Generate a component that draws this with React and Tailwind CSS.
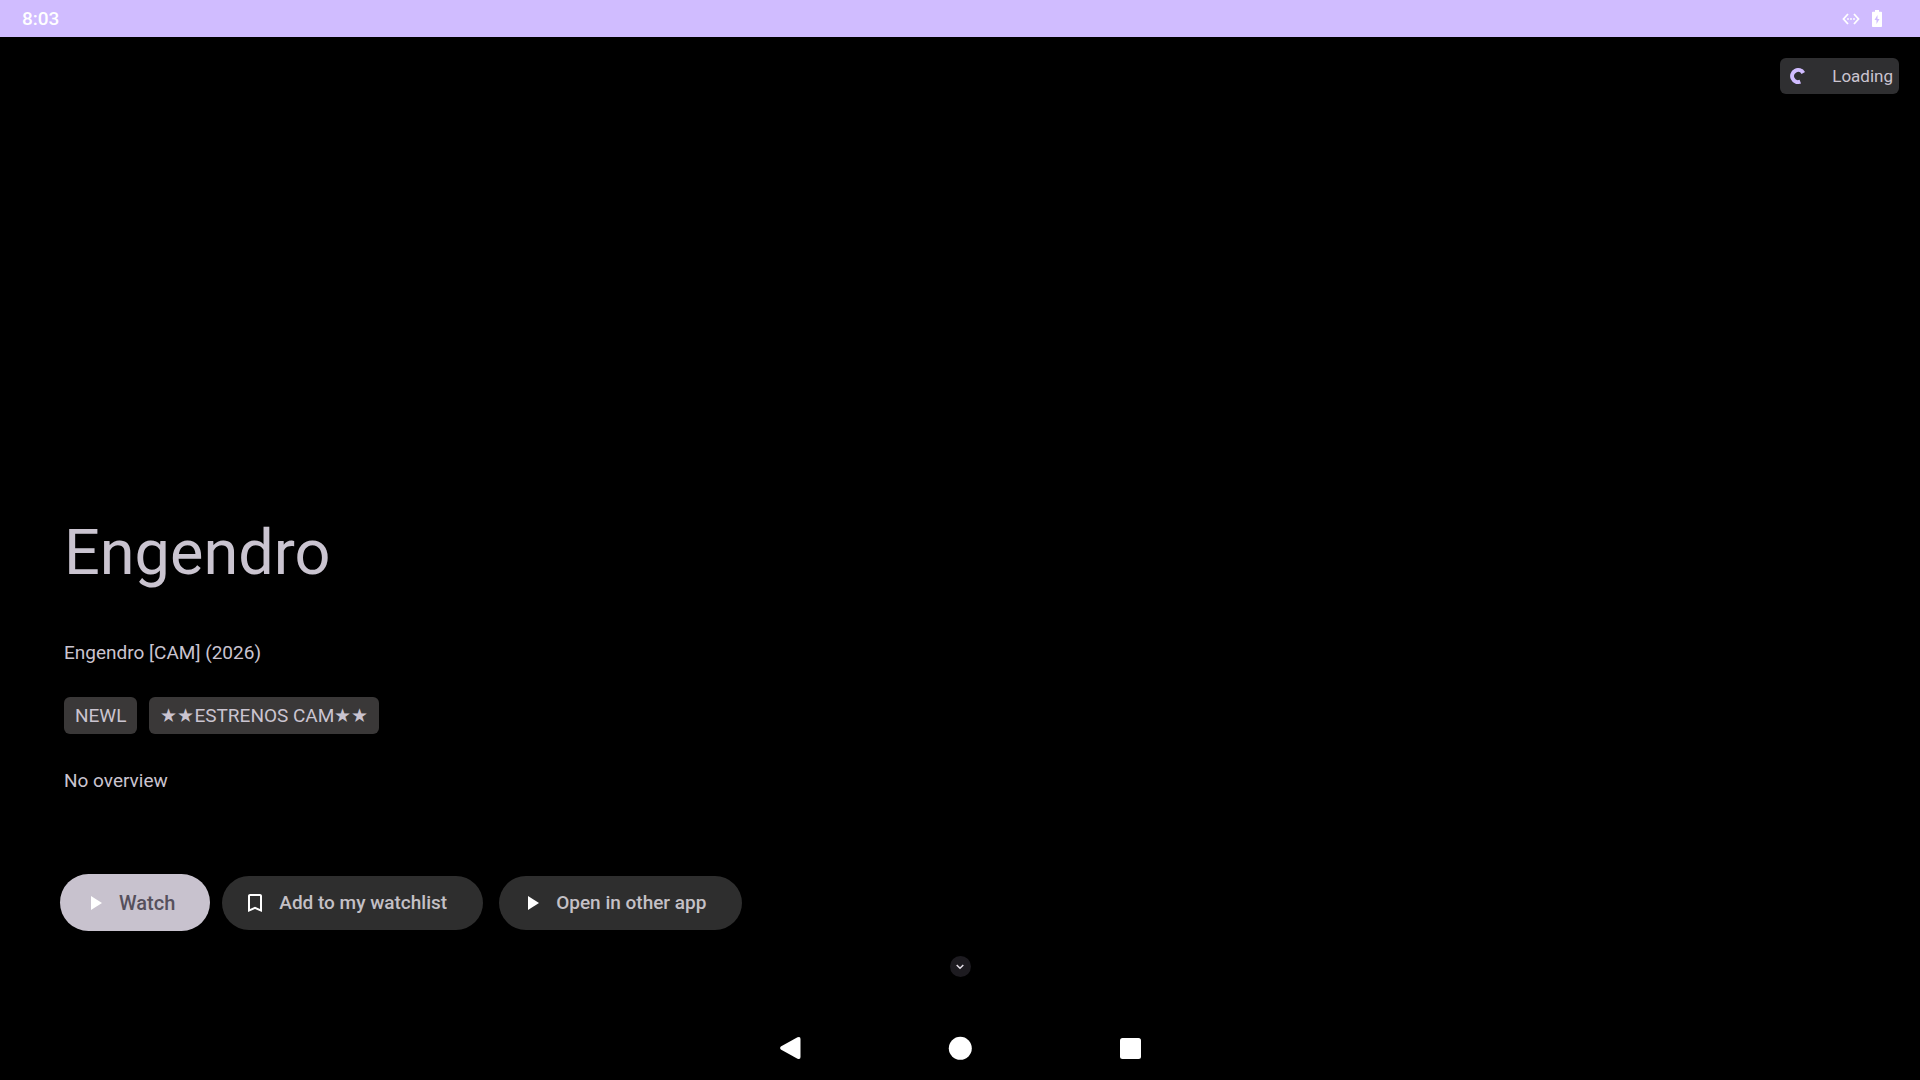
const tags = ["NEWL", "★★ESTRENOS CAM★★"];

function PlayIcon() {
  return (
    <svg viewBox="0 0 24 24" className="h-6 w-6 fill-white" aria-hidden="true">
      <path d="M8 5v14l11-7z" />
    </svg>
  );
}

function BookmarkIcon() {
  return (
    <svg viewBox="0 0 24 24" className="h-6 w-6 fill-white" aria-hidden="true">
      <path d="M17 3H7c-1.100 0-2 .9-2 2v16l7-3 7 3V5c0-1.100-.9-2-2-2zm0 15-5-2.180L7 18V5h10v13z" />
    </svg>
  );
}

function StatusBar() {
  return (
    <header className="flex h-[37px] items-center justify-between bg-[#d0bcff] pr-[38px] pl-[22px] text-white">
      <time className="pt-px text-[19px] leading-6 font-medium">8:03</time>
      <div className="flex items-center gap-3">
        <svg viewBox="0 0 18 12" className="h-3 w-[18px]" aria-label="Ethernet">
          <path
            d="M6 1 1.500 6 6 11M12 1l4.500 5-4.500 5"
            fill="none"
            stroke="white"
            strokeWidth="1.800"
          />
          <circle cx="6" cy="6" r="0.900" fill="white" />
          <circle cx="9" cy="6" r="0.900" fill="white" />
          <circle cx="12" cy="6" r="0.900" fill="white" />
        </svg>
        <svg viewBox="0 0 10 17" className="h-[17px] w-[10px]" aria-label="Battery charging">
          <path d="M3 0h4v1.700h2.200q.8 0 .8.8v13.700q0 .8-.8.8H.8q-.8 0-.8-.8V2.500q0-.8.8-.8H3z" fill="white" />
          <path d="M5.500 5 2.500 10h2v4l3-5h-2z" fill="#d0bcff" />
        </svg>
      </div>
    </header>
  );
}

function LoadingBadge() {
  return (
    <div
      role="status"
      className="flex h-9 w-[119px] items-center justify-between self-end rounded-md bg-[#2f2f31] pr-[6px] pl-[10px] text-[#cac4d0]"
    >
      <svg viewBox="0 0 16 16" className="h-4 w-4" aria-hidden="true">
        <path d="M13.300 5A6 6 0 1 0 10.300 13.600" fill="none" stroke="#d0bcff" strokeWidth="4" />
      </svg>
      <span className="text-[17px] leading-5">Loading</span>
    </div>
  );
}

function ActionButton({ icon, children }) {
  return (
    <button
      type="button"
      className="flex h-[54px] items-center gap-3 rounded-full bg-[#2e2e2e] pr-9 pl-[21px] text-[19px] leading-6 font-medium text-[#c4c0c6]"
    >
      {icon}
      {children}
    </button>
  );
}

function SystemNav() {
  return (
    <nav className="flex h-16 items-center justify-center gap-[146px]">
      <button type="button" aria-label="Back">
        <svg viewBox="0 0 24 24" className="h-6 w-6 fill-white">
          <path d="M19.500 1.300Q22.500 0 22.500 3v18q0 3-3 1.700L2.800 13.600Q1.200 12 2.800 10.400z" />
        </svg>
      </button>
      <button type="button" aria-label="Home">
        <svg viewBox="0 0 24 24" className="h-6 w-6 fill-white">
          <circle cx="12.300" cy="12.300" r="11.500" />
        </svg>
      </button>
      <button type="button" aria-label="Recent apps">
        <svg viewBox="0 0 24 24" className="h-6 w-6 fill-white">
          <rect x="2" y="2" width="21" height="21" rx="2.500" />
        </svg>
      </button>
    </nav>
  );
}

export default function App() {
  return (
    <div className="flex min-h-screen flex-col bg-black font-['Roboto',sans-serif]">
      <StatusBar />

      <main className="flex flex-1 flex-col pt-[21px]">
        <div className="flex flex-col px-[21px]">
          <LoadingBadge />
        </div>

        <section className="mt-auto flex flex-col items-start px-16 text-[19px] leading-6 text-[#cac4d0]">
          <h1 className="text-[63px] leading-[76px]">Engendro</h1>
          <p className="mt-[50px]">Engendro [CAM] (2026)</p>
          <ul className="mt-8 flex gap-3">
            {tags.map((tag) => (
              <li key={tag} className="flex h-[37px] items-center rounded-md bg-[#3a3838] px-[11px]">
                {tag}
              </li>
            ))}
          </ul>
          <p className="mt-[35px]">No overview</p>

          <div className="mt-[81px] -ml-1 flex items-center gap-4">
            <button
              type="button"
              className="-mr-1 flex h-[57px] items-center gap-3 rounded-full bg-[#c8c2ce] pr-[35px] pl-[23px] text-[20px] leading-6 font-medium text-[#56505c]"
            >
              <PlayIcon />
              Watch
            </button>
            <ActionButton icon={<BookmarkIcon />}>Add to my watchlist</ActionButton>
            <ActionButton icon={<PlayIcon />}>Open in other app</ActionButton>
          </div>
        </section>

        <button
          type="button"
          aria-label="Show more"
          className="mt-[25px] mb-[39px] flex h-[21px] w-[21px] items-center justify-center self-center rounded-full bg-[#1d1b20]"
        >
          <svg viewBox="0 0 8 6" className="h-[6px] w-2" aria-hidden="true">
            <path d="M.7 1 4 4.300 7.300 1" fill="none" stroke="#e6e0e9" strokeWidth="1.500" />
          </svg>
        </button>
      </main>

      <SystemNav />
    </div>
  );
}
